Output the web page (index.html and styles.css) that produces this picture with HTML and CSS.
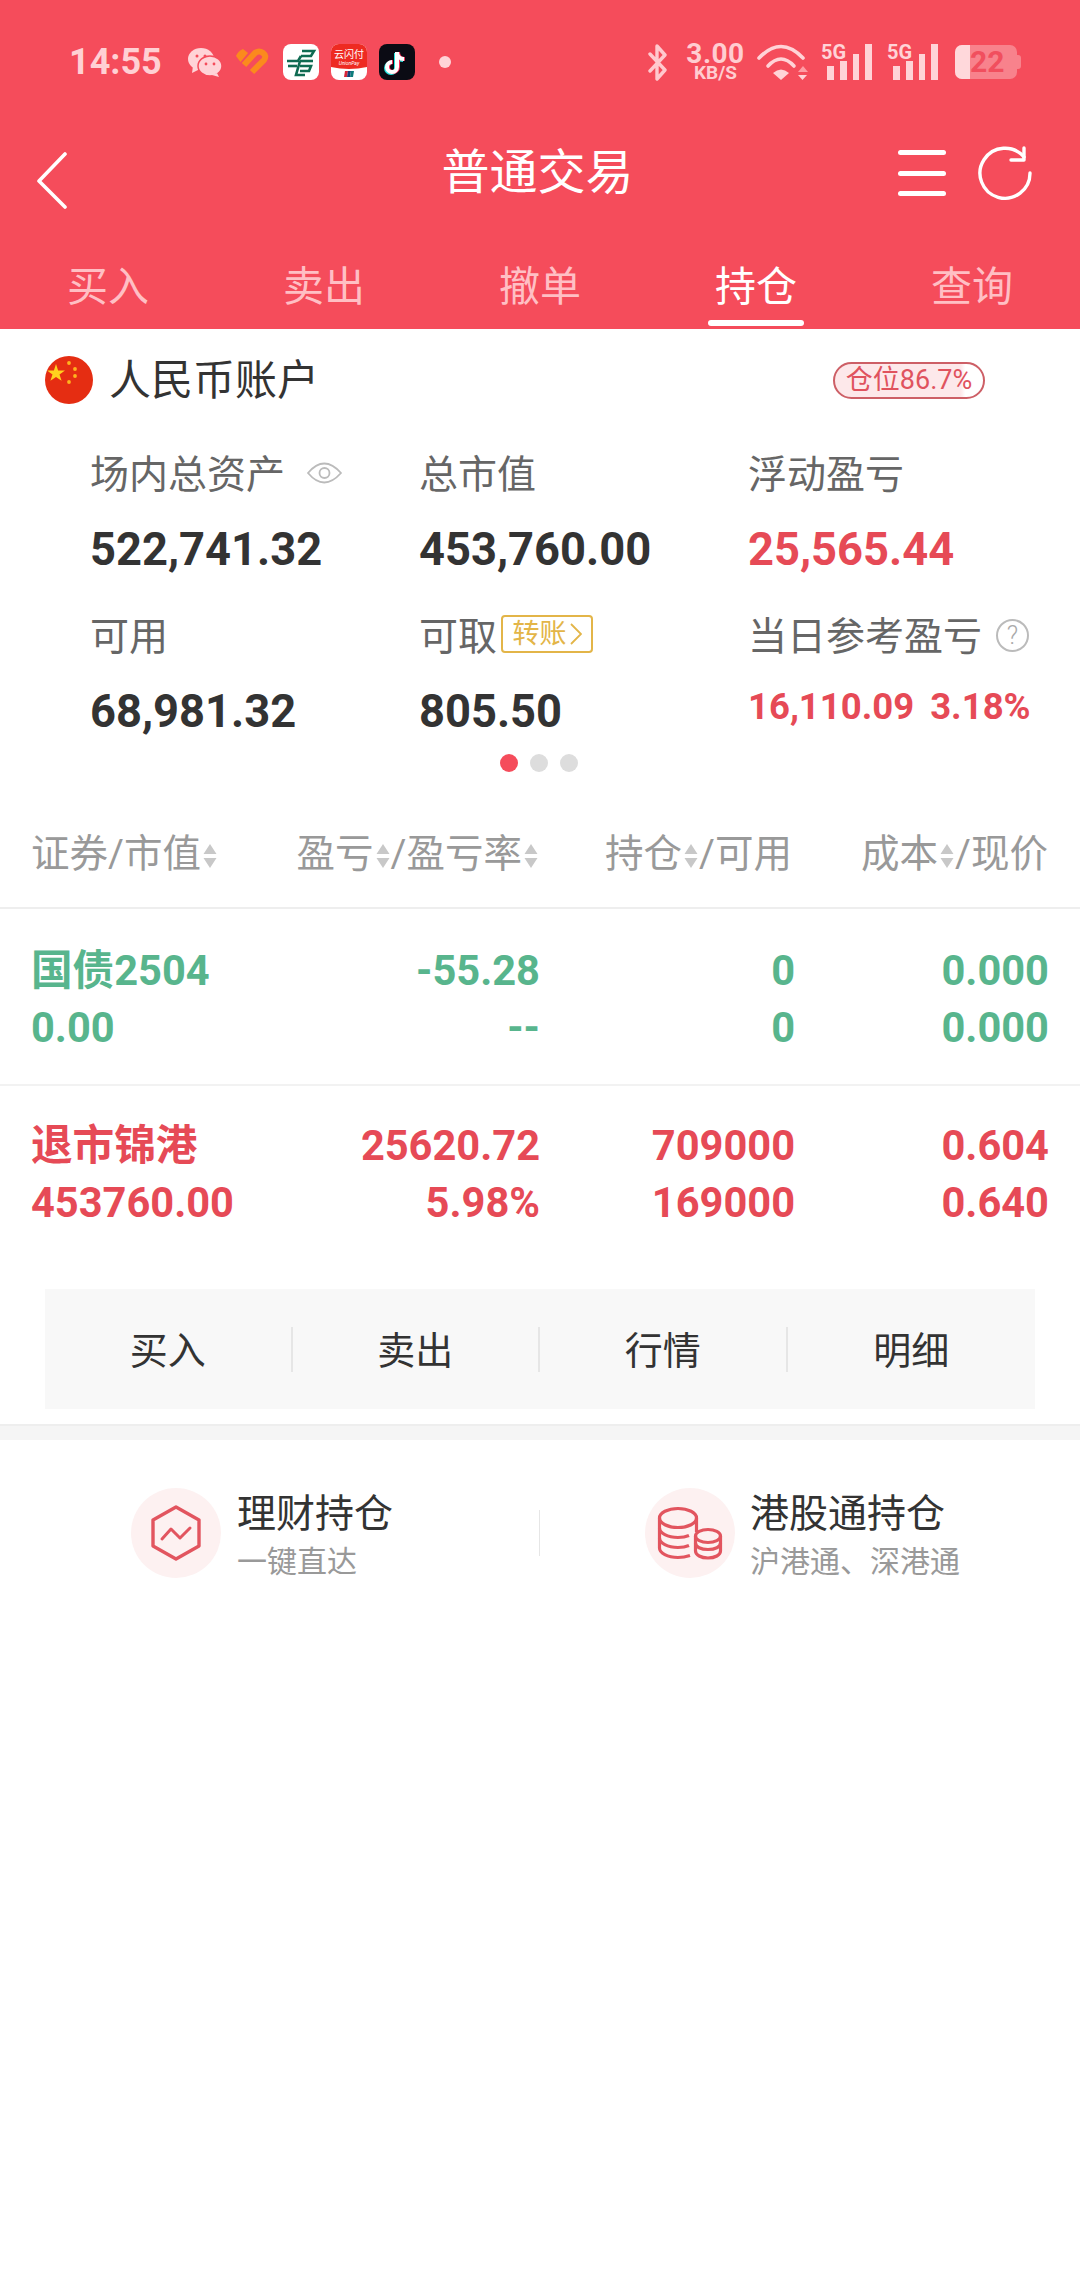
FILE: index.html
```html
<!DOCTYPE html>
<html lang="zh-CN">
<head>
<meta charset="utf-8">
<title>普通交易</title>
<link rel="stylesheet" href="styles.css">
</head>
<body>
<div class="page">
  <header class="head">
    <div class="status">
      <span class="time">14:55</span>
      <svg class="ic-wechat" viewBox="0 0 34 29"><ellipse cx="13" cy="11" rx="13" ry="11" fill="#FFD3D7"/><path d="M5 18l-1 7 8-4z" fill="#FFD3D7"/><ellipse cx="22" cy="18" rx="12" ry="10" fill="#FFD3D7" stroke="#F54C5B" stroke-width="1.5"/><path d="M29 25l2 4-7-2z" fill="#FFD3D7"/><circle cx="9" cy="8" r="1.5" fill="#F54C5B"/><circle cx="17" cy="8" r="1.5" fill="#F54C5B"/><circle cx="18" cy="16" r="1.4" fill="#F54C5B"/><circle cx="26" cy="16" r="1.4" fill="#F54C5B"/></svg>
      <svg class="ic-heart" viewBox="0 0 34 29"><path d="M0 8Q2 3 7 1L12 5 4.500 14z" fill="#FB8A1D"/><path d="M16 24L28 12Q31 8 27 5Q23 2 19 5L8 17" fill="none" stroke="#FB8A1D" stroke-width="6"/></svg>
      <svg class="ic-app" viewBox="0 0 36 36"><rect width="36" height="36" rx="8" fill="#fff"/><g fill="none" stroke="#0F6B52" stroke-width="2.6"><path d="M19 7h12l-3 5H18"/><path d="M4 17h11l3-5"/><path d="M17 17h13"/><path d="M5 22h9"/><path d="M17 22h11l-2 5H17"/><path d="M17 17l-4 14h9"/></g></svg>
      <svg class="ic-app" viewBox="0 0 36 36"><rect width="36" height="36" rx="8" fill="#fff"/><path d="M0 8a8 8 0 0 1 8-8h20a8 8 0 0 1 8 8v15q-18 4-36 0z" fill="#EE2A22"/><text x="18" y="14" class="up-cn">云闪付</text><text x="18" y="21" class="up-en">UnionPay</text><path d="M14 27h3l-1 6h-3z" fill="#D8263A"/><path d="M17 27h3l-1 6h-3z" fill="#17407A"/><path d="M20 27h3l-1 6h-3z" fill="#0E7C7B"/></svg>
      <svg class="ic-app" viewBox="0 0 36 36"><rect width="36" height="36" rx="8" fill="#0B0B14"/><g fill="none" stroke-width="4"><path d="M18 8v15a5 5 0 1 1-5-5M18 8c0 4 3 7 7 7" stroke="#25E4E0" transform="translate(-1 1)"/><path d="M18 8v15a5 5 0 1 1-5-5M18 8c0 4 3 7 7 7" stroke="#F5305A" transform="translate(1 0)"/><path d="M18 8v15a5 5 0 1 1-5-5M18 8c0 4 3 7 7 7" stroke="#fff"/></g></svg>
      <span class="dot"></span>
      <svg class="ic-bt" viewBox="0 0 21 37"><path d="M3 10L18 26 10 35V2l8 9L3 27" fill="none" stroke="#FFC9CE" stroke-width="3.4" stroke-linejoin="round" stroke-linecap="round"/></svg>
      <span class="speed"><span class="speed-num">3.00</span><span class="speed-unit">KB/S</span></span>
      <svg class="ic-wifi" viewBox="0 0 51 36"><g fill="none" stroke="#FFD3D7" stroke-width="3.6" stroke-linecap="round"><path d="M2 14Q24-9 46 14"/><path d="M11 22Q24 8 37 22"/></g><path d="M16 29Q24 22 32 29L24 36z" fill="#FFD3D7"/><path d="M45 27l-5 0 5-6 5 6z" fill="#FF9CA4" transform="translate(1 1)"/><path d="M41 31h9l-4.500 5z" fill="#FFD3D7"/></svg>
      <span class="signal"><span class="five-g">5G</span><i class="bar b1"></i><i class="bar b2"></i><i class="bar b3"></i><i class="bar b4"></i></span>
      <span class="signal signal-2"><span class="five-g">5G</span><i class="bar b1"></i><i class="bar b2"></i><i class="bar b3"></i><i class="bar b4"></i></span>
      <span class="battery"><span class="batt-fill"></span><span class="batt-num">22</span></span>
    </div>
    <div class="nav">
      <svg class="ic-back" viewBox="0 0 30 57"><path d="M28 2L2 29l26 26" fill="none" stroke="#fff" stroke-width="3.6" stroke-linecap="round" stroke-linejoin="round"/></svg>
      <div class="title">普通交易</div>
      <div class="nav-right">
        <span class="menu"><i></i><i></i><i></i></span>
        <svg class="ic-refresh" viewBox="0 0 60 60"><g fill="none" stroke="#fff" stroke-width="3.4" stroke-linecap="round" stroke-linejoin="round"><path d="M55 30A25 25 0 1 1 49 14"/><path d="M49 5v12H36"/></g></svg>
      </div>
    </div>
    <nav class="tabs">
      <span class="tab">买入</span>
      <span class="tab">卖出</span>
      <span class="tab">撤单</span>
      <span class="tab tab-on">持仓</span>
      <span class="tab">查询</span>
    </nav>
  </header>

  <section class="account">
    <svg class="flag" viewBox="0 0 48 48"><circle cx="24" cy="24" r="24" fill="#E52D12"/><path d="M11 8l2.100 6.400H20l-5.500 4 2.100 6.400L11 20.900l-5.600 3.900 2.100-6.400-5.500-4h6.900z" fill="#FFD21E"/><g fill="#FFB31E"><circle cx="24" cy="7" r="1.900"/><circle cx="30" cy="13" r="1.900"/><circle cx="30" cy="20" r="1.900"/><circle cx="24" cy="26" r="1.900"/></g></svg>
    <span class="acct-name">人民币账户</span>
    <span class="pill">仓位86.7%</span>
  </section>

  <section class="stats">
    <div class="stat">
      <div class="label">场内总资产<svg class="ic-eye" viewBox="0 0 35 22"><path d="M1 11Q17-8 34 11 17 30 1 11z" fill="none" stroke="#BBB" stroke-width="1.800"/><circle cx="17.500" cy="11" r="5" fill="none" stroke="#BBB" stroke-width="1.800"/></svg></div>
      <div class="value">522,741.32</div>
    </div>
    <div class="stat">
      <div class="label">总市值</div>
      <div class="value">453,760.00</div>
    </div>
    <div class="stat">
      <div class="label">浮动盈亏</div>
      <div class="value red">25,565.44</div>
    </div>
    <div class="stat">
      <div class="label">可用</div>
      <div class="value">68,981.32</div>
    </div>
    <div class="stat">
      <div class="label">可取<span class="transfer">转账<svg class="ic-gt" viewBox="0 0 12 24"><path d="M1 2l10 10L1 22" fill="none" stroke="#E3B548" stroke-width="1.800"/></svg></span></div>
      <div class="value">805.50</div>
    </div>
    <div class="stat">
      <div class="label">当日参考盈亏<span class="help">?</span></div>
      <div class="value value-sm red"><span>16,110.09</span><span>3.18%</span></div>
    </div>
  </section>

  <div class="dots"><i class="on"></i><i></i><i></i></div>

  <div class="thead grid">
    <div class="th th-left">证券/市值<svg class="sort" viewBox="0 0 14 24"><path d="M7 0l6.500 10H.5zM7 24l6.500-10H.5z" fill="#C8C8C8"/></svg></div>
    <div class="th">盈亏<svg class="sort" viewBox="0 0 14 24"><path d="M7 0l6.500 10H.5zM7 24l6.500-10H.5z" fill="#C8C8C8"/></svg>/盈亏率<svg class="sort" viewBox="0 0 14 24"><path d="M7 0l6.500 10H.5zM7 24l6.500-10H.5z" fill="#C8C8C8"/></svg></div>
    <div class="th">持仓<svg class="sort" viewBox="0 0 14 24"><path d="M7 0l6.500 10H.5zM7 24l6.500-10H.5z" fill="#C8C8C8"/></svg>/可用</div>
    <div class="th">成本<svg class="sort" viewBox="0 0 14 24"><path d="M7 0l6.500 10H.5zM7 24l6.500-10H.5z" fill="#C8C8C8"/></svg>/现价</div>
  </div>

  <div class="row row-a grid green">
    <div class="cell-left">国债2504</div><div>-55.28</div><div>0</div><div>0.000</div>
    <div class="cell-left">0.00</div><div>--</div><div>0</div><div>0.000</div>
  </div>
  <div class="row row-b grid red">
    <div class="cell-left">退市锦港</div><div>25620.72</div><div>709000</div><div>0.604</div>
    <div class="cell-left">453760.00</div><div>5.98%</div><div>169000</div><div>0.640</div>
  </div>

  <div class="actions">
    <span class="act">买入</span>
    <span class="act">卖出</span>
    <span class="act">行情</span>
    <span class="act">明细</span>
  </div>

  <div class="band"></div>

  <section class="links">
    <div class="link link-l">
      <span class="circle"><svg class="ic-link" viewBox="0 0 90 90"><path d="M45 19L68 32V58L45 71 22 58V32z" fill="none" stroke="#E2555F" stroke-width="3.400" stroke-linejoin="round"/><path d="M31 51l9-10 9 9 10-10" fill="none" stroke="#E2555F" stroke-width="3" stroke-linecap="round" stroke-linejoin="round"/></svg></span>
      <div class="link-text"><div class="link-title">理财持仓</div><div class="link-sub">一键直达</div></div>
    </div>
    <div class="link link-r">
      <span class="circle"><svg class="ic-link" viewBox="0 0 90 90"><g fill="none" stroke="#E2555F" stroke-width="3.200"><ellipse cx="33" cy="30" rx="18.500" ry="9.500"/><path d="M14.500 30v30c0 5 8 9.500 18.500 9.500 5 0 9-1 12-2"/><path d="M14.500 40c0 5 8 9.500 18.500 9.500 4 0 8-.7 11-2"/><path d="M14.500 50c0 5 8 9.500 18.500 9.500 4 0 8-.7 11-2"/><path d="M51.500 30v14"/><ellipse cx="63" cy="48" rx="12.500" ry="6.500"/><path d="M50.500 48v15c0 4 5.500 7 12.500 7s12.500-3 12.500-7V48"/><path d="M50.500 55c0 4 5.500 6.500 12.500 6.500s12.500-2.500 12.500-6.500"/></g></svg></span>
      <div class="link-text"><div class="link-title">港股通持仓</div><div class="link-sub">沪港通、深港通</div></div>
    </div>
  </section>
</div>
</body>
</html>
```
FILE: styles.css
```css
* { box-sizing: border-box; }
html, body { margin: 0; padding: 0; background: #fff; }
body { font-family: Roboto, "Noto Sans CJK SC", sans-serif; color: #333; }
.page { width: 1080px; height: 2295px; overflow: hidden; background: #fff; }

/* header */
.head { height: 329px; background: #F54C5B; color: #fff; }
.status { height: 124px; display: flex; align-items: center; padding-left: 69px; }
.time { width: 92px; font-size: 36px; font-weight: 700; color: #FFD0D4; line-height: 1; letter-spacing: 0; }
.ic-wechat { width: 34px; height: 29px; margin-left: 27px; margin-top: 1px; }
.ic-heart { width: 34px; height: 29px; margin-left: 14px; margin-top: 1px; }
.ic-app { width: 36px; height: 36px; margin-left: 12px; }
.ic-wechat + .ic-heart + .ic-app { margin-left: 13px; }
.up-cn { font-size: 10px; fill: #fff; text-anchor: middle; font-family: "Noto Sans CJK SC", sans-serif; }
.up-en { font-size: 5px; fill: #fff; text-anchor: middle; font-style: italic; font-family: Roboto, sans-serif; }
.dot { width: 12px; height: 12px; border-radius: 50%; background: #FFD3D7; margin-left: 24px; }
.ic-bt { width: 21px; height: 37px; margin-left: 196px; }
.speed { width: 57px; margin-left: 19px; margin-top: -2px; display: flex; flex-direction: column; align-items: center; color: #FFCDD1; font-weight: 700; white-space: nowrap; }
.speed-num { font-size: 28px; line-height: 23px; font-weight: 700; letter-spacing: .5px; }
.speed-unit { font-size: 19px; line-height: 15px; }
.ic-wifi { width: 51px; height: 36px; margin-left: 13px; }
.signal { position: relative; width: 51px; height: 36px; margin-left: 13px; display: flex; align-items: flex-end; gap: 6px; padding-left: 6px; }
.signal-2 { margin-left: 15px; }
.five-g { position: absolute; left: 0; top: -2px; font-size: 20px; line-height: 20px; font-weight: 700; color: #FFD3D7; }
.bar { display: block; width: 7px; background: #FFD3D7; }
.b1 { height: 14px; }
.b2 { height: 19px; }
.b3 { height: 26px; }
.b4 { height: 36px; }
.battery { position: relative; width: 62px; height: 34px; margin-left: 17px; border-radius: 7px; background: rgba(255,255,255,.3); overflow: visible; }
.battery::after { content: ""; position: absolute; left: 62px; top: 10px; width: 4px; height: 14px; border-radius: 0 3px 3px 0; background: rgba(255,255,255,.3); }
.batt-fill { position: absolute; left: 0; top: 0; bottom: 0; width: 15px; border-radius: 7px 0 0 7px; background: #FFD8DB; }
.batt-num { position: absolute; left: 15px; top: 0; width: 33px; text-align: center; font-size: 30px; line-height: 34px; font-weight: 700; color: #F14F5E; }

.nav { height: 98px; display: grid; grid-template-columns: 1fr auto 1fr; align-items: center; padding: 0 45px 0 37px; }
.ic-back { width: 30px; height: 57px; margin-top: 14px; }
.title { font-size: 48px; line-height: 60px; margin-left: 3px; }
.nav-right { display: flex; justify-content: flex-end; align-items: center; gap: 29px; }
.menu { width: 48px; height: 46px; display: flex; flex-direction: column; justify-content: space-between; }
.menu i { display: block; height: 5px; border-radius: 3px; background: #fff; }
.ic-refresh { width: 60px; height: 60px; }

.tabs { height: 107px; display: grid; grid-template-columns: repeat(5, 216px); }
.tab { position: relative; padding-top: 35px; height: 107px; text-align: center; font-size: 41px; line-height: 60px; color: #FFBFC4; }
.tab-on { color: #fff; }
.tab-on::after { content: ""; position: absolute; left: 60px; top: 98px; width: 96px; height: 6px; border-radius: 3px; background: #fff; }

/* account */
.account { height: 102px; display: flex; align-items: center; padding-left: 45px; }
.flag { width: 48px; height: 48px; }
.acct-name { margin-left: 16px; margin-top: 2px; font-size: 42px; line-height: 50px; color: #333; }
.pill { margin-left: 514px; width: 152px; height: 37px; border: 2px solid #CD5F66; border-radius: 19px; text-align: center; font-size: 27px; line-height: 33px; color: #E0535E; background: linear-gradient(90deg, #FDE8EA 0 85%, #fff 88%); white-space: nowrap; }

/* stats */
.stats { margin-top: 19px; padding-left: 90px; display: grid; grid-template-columns: repeat(3, 329px); row-gap: 32px; }
.label { display: flex; align-items: center; height: 50px; font-size: 39px; line-height: 50px; color: #666; white-space: nowrap; }
.value { margin-top: 20px; height: 60px; font-size: 45.300px; line-height: 60px; font-weight: 700; color: #333; }
.value-sm { display: flex; gap: 16px; font-size: 36.500px; margin-top: 15px; height: 59px; }
.red { color: #E64A56; }
.green { color: #58B58D; }
.value.red { color: #E64A56; }
.ic-eye { width: 35px; height: 22px; margin-left: 22px; margin-top: -4px; }
.transfer { display: flex; align-items: center; justify-content: center; width: 92px; height: 38px; margin-left: 4px; margin-top: -6px; border: 2px solid #E3B548; border-radius: 4px; font-size: 27px; line-height: 34px; color: #E3B548; gap: 3px; }
.ic-gt { width: 12px; height: 24px; flex: none; }
.help { width: 33px; height: 33px; margin-left: 14px; margin-top: -4px; border: 2px solid #BBB; border-radius: 50%; text-align: center; font-size: 25px; line-height: 29px; font-weight: 300; color: #AAA; }

.dots { height: 18px; margin-top: 12px; display: flex; justify-content: center; gap: 12px; padding-right: 3px; }
.dots i { display: block; width: 18px; height: 18px; border-radius: 50%; background: #DDD; }
.dots .on { background: #F54C5B; }

/* table */
.grid { display: grid; grid-template-columns: 260px 248px 253px 256px; padding: 0 31px 0 31px; }
.grid > div { text-align: right; white-space: nowrap; }
.grid > .cell-left, .grid > .th-left { text-align: left; }
.thead { height: 137px; padding-top: 57px; border-bottom: 2px solid #EEE; font-size: 38.500px; line-height: 50px; color: #999; align-content: start; }
.sort { width: 14px; height: 24px; margin: 0 1px 0 2px; vertical-align: -1px; }
.row { grid-template-columns: 261px 248px 255px 254px; font-size: 41.600px; line-height: 57px; font-weight: 700; }
.row-a { padding-top: 33px; padding-bottom: 28px; border-bottom: 2px solid #F2F2F2; }
.row-b { padding-top: 31px; }

.actions { margin: 58px 45px 0; height: 120px; background: #F8F8F8; display: grid; grid-template-columns: repeat(4, 1fr); align-items: center; }
.act { height: 45px; text-align: center; font-size: 38px; line-height: 49px; color: #333; border-right: 2px solid #E6E6E6; }
.act:last-child { border-right: 0; }

.band { margin-top: 15px; height: 16px; background: #F5F5F5; border-top: 2px solid #EEE; }

.links { display: flex; height: 186px; align-items: center; }
.link { display: flex; align-items: center; width: 540px; height: 90px; }
.link-l { padding-left: 131px; width: 539px; }
.link-r { padding-left: 106px; width: 541px; position: relative; }
.link-r::before { content: ""; position: absolute; left: 0; top: 22px; width: 1px; height: 46px; background: #E6E6E6; }
.circle { width: 90px; height: 90px; border-radius: 50%; background: #FDF1F1; flex: none; }
.ic-link { display: block; width: 90px; height: 90px; }
.link-text { margin-left: 16px; }
.link-r .link-text { margin-left: 15px; }
.link-title { font-size: 39px; line-height: 50px; color: #333; margin-top: 3.500px; }
.link-sub { font-size: 30px; line-height: 38px; color: #999; margin-top: 4.500px; }
```
